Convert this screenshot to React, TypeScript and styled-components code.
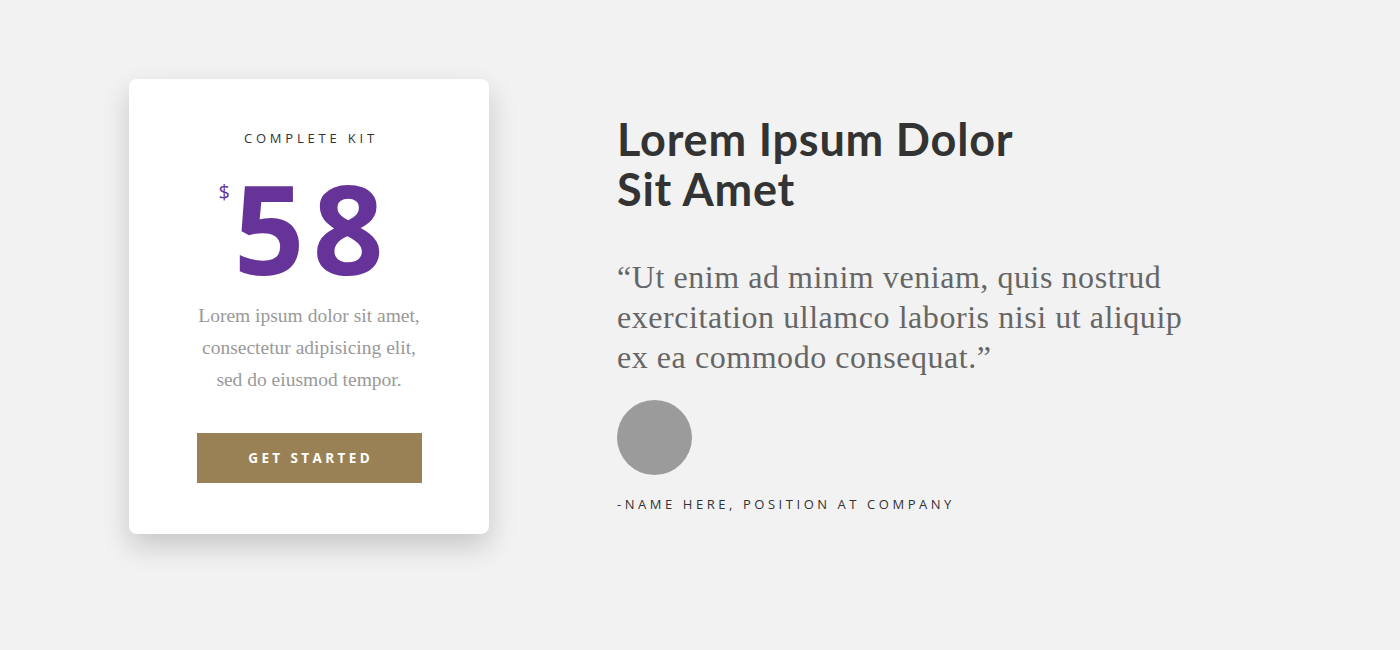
import React from "react";
import styled, { createGlobalStyle } from "styled-components";

const Global = createGlobalStyle`
  html, body { margin: 0; padding: 0; background: #f2f2f2; }
  body { width: 1400px; height: 650px; overflow: hidden; }
`;

const Page = styled.div`
  display: flex;
  align-items: flex-start;
  padding: 79px 0 0 129px;
  gap: 128px;
`;

const Card = styled.div`
  width: 360px;
  height: 455px;
  box-sizing: border-box;
  background: #fff;
  border-radius: 8px;
  box-shadow: 0 12px 28px rgba(0, 0, 0, 0.18);
  display: flex;
  flex-direction: column;
  align-items: center;
  padding-top: 50px;
`;

const Kicker = styled.div`
  font-family: "Open Sans", sans-serif;
  font-size: 13px;
  letter-spacing: 3.8px;
  color: #333;
  line-height: 18px;
  margin-right: -3.8px;
`;

const PriceRow = styled.div`
  display: flex;
  align-items: flex-start;
  margin-top: 20px;
  color: #663399;
  margin-left: -16px;
`;

const Currency = styled.span`
  font-family: "Open Sans", sans-serif;
  font-size: 20px;
  line-height: 20px;
  margin-top: 15px;
  margin-right: 4px;
`;

const Amount = styled.span`
  font-family: "Open Sans", sans-serif;
  font-weight: 700;
  font-size: 124px;
  line-height: 120px;
  letter-spacing: 8px;
  margin-right: -8px;
`;

const Desc = styled.p`
  font-family: "Liberation Serif", serif;
  font-size: 19.5px;
  line-height: 32px;
  color: #999;
  text-align: center;
  margin: 13px 0 0;
`;

const Button = styled.button`
  margin-top: 37px;
  width: 225px;
  height: 50px;
  border: none;
  border-radius: 0;
  background: #9a8155;
  color: #fff;
  font-family: "Open Sans", sans-serif;
  font-weight: 700;
  font-size: 13.5px;
  letter-spacing: 3.4px;
  padding: 0 0 0 3.4px;
`;

const Side = styled.div`
  display: flex;
  flex-direction: column;
  align-items: flex-start;
  padding-top: 35px;
`;

const Title = styled.h1`
  font-family: "Lato", sans-serif;
  font-weight: 700;
  font-size: 45px;
  line-height: 50px;
  color: #333;
  margin: 0;
  letter-spacing: 0.8px;
`;

const Quote = styled.p`
  font-family: "Liberation Serif", serif;
  font-size: 32px;
  line-height: 40px;
  color: #666;
  margin: 43px 0 0;
  width: 620px;
  letter-spacing: 0.55px;
`;

const Avatar = styled.div`
  width: 75px;
  height: 75px;
  border-radius: 50%;
  background: #9b9b9b;
  margin-top: 23px;
`;

const Name = styled.div`
  font-family: "Open Sans", sans-serif;
  font-size: 13px;
  letter-spacing: 3.55px;
  color: #333;
  margin-top: 20px;
`;

export default function App() {
  return (
    <>
      <Global />
      <Page>
        <Card>
          <Kicker>COMPLETE KIT</Kicker>
          <PriceRow>
            <Currency>$</Currency>
            <Amount>58</Amount>
          </PriceRow>
          <Desc>
            Lorem ipsum dolor sit amet,
            <br />
            consectetur adipisicing elit,
            <br />
            sed do eiusmod tempor.
          </Desc>
          <Button>GET STARTED</Button>
        </Card>
        <Side>
          <Title>
            Lorem Ipsum Dolor
            <br />
            Sit Amet
          </Title>
          <Quote>
            “Ut enim ad minim veniam, quis nostrud
            <br />
            exercitation ullamco laboris nisi ut aliquip
            <br />
            ex ea commodo consequat.”
          </Quote>
          <Avatar />
          <Name>-NAME HERE, POSITION AT COMPANY</Name>
        </Side>
      </Page>
    </>
  );
}
